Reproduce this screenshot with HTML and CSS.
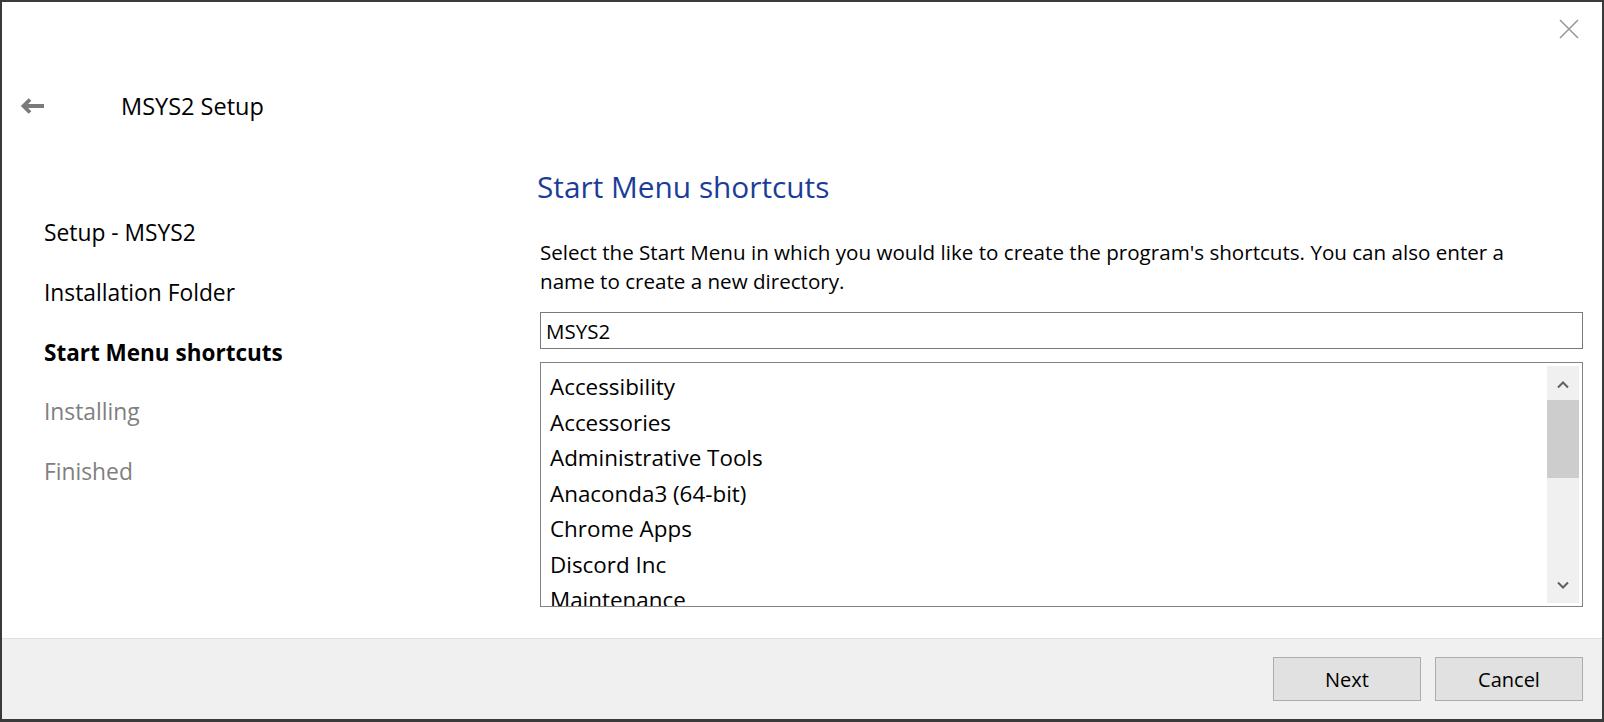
FILE: index.html
```html
<!DOCTYPE html>
<html lang="en">
<head>
    <meta charset="UTF-8">
    <title>MSYS2 Setup</title>
    <link rel="stylesheet" href="styles.css">
</head>
<body>
    <div class="window">
        <div class="topbar">
            <button class="close-btn" title="Close">
                <svg width="20" height="20" viewBox="0 0 20 20">
                    <path d="M1 1 L19 19 M19 1 L1 19" stroke="#999" stroke-width="1.6" fill="none"/>
                </svg>
            </button>
        </div>

        <!-- Back arrow and wizard title -->
        <div class="header">
            <svg class="back-arrow" width="24" height="16" viewBox="0 0 24 16">
                <path d="M5 8 H24" stroke="#7a7a7a" stroke-width="4" fill="none"/>
                <path d="M10 1.5 L3.5 8 L10 14.5" stroke="#7a7a7a" stroke-width="3.8" fill="none"/>
            </svg>
            <span class="title">MSYS2 Setup</span>
        </div>

        <div class="main">
            <!-- Wizard steps -->
            <ul class="steps">
                <li>Setup - MSYS2</li>
                <li>Installation Folder</li>
                <li class="current">Start Menu shortcuts</li>
                <li class="pending">Installing</li>
                <li class="pending">Finished</li>
            </ul>

            <div class="page">
                <h1>Start Menu shortcuts</h1>
                <p class="description">Select the Start Menu in which you would like to create the program's shortcuts. You can also enter a name to create a new directory.</p>
                <input type="text" class="folder-input" value="MSYS2">

                <div class="listbox">
                    <ul class="list-items">
                        <li>Accessibility</li>
                        <li>Accessories</li>
                        <li>Administrative Tools</li>
                        <li>Anaconda3 (64-bit)</li>
                        <li>Chrome Apps</li>
                        <li>Discord Inc</li>
                        <li>Maintenance</li>
                    </ul>
                    <div class="scrollbar">
                        <svg class="sb-arrow sb-up" width="12" height="8" viewBox="0 0 12 8">
                            <path d="M1 6.5 L6 1.5 L11 6.5" stroke="#606060" stroke-width="2" fill="none"/>
                        </svg>
                        <div class="sb-track">
                            <div class="sb-thumb"></div>
                        </div>
                        <svg class="sb-arrow sb-down" width="12" height="8" viewBox="0 0 12 8">
                            <path d="M1 1.5 L6 6.5 L11 1.5" stroke="#606060" stroke-width="2" fill="none"/>
                        </svg>
                    </div>
                </div>
            </div>
        </div>

        <div class="footer">
            <button class="btn">Next</button>
            <button class="btn">Cancel</button>
        </div>
    </div>
</body>
</html>
```

FILE: styles.css
```css
html, body {
    margin: 0;
    padding: 0;
}

body {
    background: #3a3a3a;
    font-family: 'Open Sans', 'Noto Sans', sans-serif;
    color: #000;
    overflow: hidden;
}

.window {
    margin: 2px 2px 0 2px;
    height: 717px;
    background: #fff;
    display: flex;
    flex-direction: column;
}

.topbar {
    height: 80px;
    display: flex;
    justify-content: flex-end;
    align-items: flex-start;
    padding-right: 23px;
    box-sizing: border-box;
}

.close-btn {
    margin-top: 17px;
    width: 20px;
    height: 20px;
    padding: 0;
    border: none;
    background: none;
    display: flex;
}

.header {
    height: 48px;
    display: flex;
    align-items: center;
    padding-left: 18px;
}

.back-arrow {
    flex-shrink: 0;
}

.title {
    margin-left: 77px;
    font-size: 23.5px;
    line-height: 30px;
}

.main {
    flex: 1;
    display: flex;
}

.steps {
    list-style: none;
    margin: 0;
    padding: 73px 0 0 42px;
    width: 538px;
    box-sizing: border-box;
}

.steps li {
    font-size: 22.8px;
    line-height: 59.8px;
}

.steps li.current {
    font-weight: bold;
    font-size: 22.5px;
}

.steps li.pending {
    color: #7f7f7f;
}

.page {
    flex: 1;
    padding: 37px 19px 0 0;
}

.page h1 {
    margin: 0 0 0 -3px;
    font-size: 29.8px;
    line-height: 40px;
    font-weight: normal;
    color: #1b3d98;
}

.description {
    margin: 31px 0 0 0;
    max-width: 1000px;
    font-size: 20.6px;
    line-height: 29px;
}

.folder-input {
    display: block;
    margin-top: 16px;
    width: 100%;
    height: 37px;
    box-sizing: border-box;
    border: 1px solid #7a7a7a;
    padding: 0 5px;
    font-family: inherit;
    font-size: 20.5px;
    color: #000;
    outline: none;
}

.listbox {
    margin-top: 13px;
    height: 245px;
    box-sizing: border-box;
    border: 1px solid #828282;
    display: flex;
}

.list-items {
    flex: 1;
    list-style: none;
    margin: 0;
    padding: 6px 0 0 9px;
    overflow: hidden;
}

.list-items li {
    font-size: 22.4px;
    line-height: 35.5px;
    white-space: nowrap;
}

.scrollbar {
    width: 32px;
    margin: 3px 3px 3px 0;
    background: #f0f0f0;
    display: flex;
    flex-direction: column;
    align-items: center;
}

.sb-arrow {
    flex-shrink: 0;
}

.sb-up {
    margin: 15px 0 11px;
}

.sb-down {
    margin: 0 0 14px;
}

.sb-track {
    flex: 1;
    width: 100%;
}

.sb-thumb {
    height: 78px;
    background: #cdcdcd;
}

.footer {
    height: 81px;
    box-sizing: border-box;
    border-top: 1px solid #dfdfdf;
    background: #f0f0f0;
    display: flex;
    justify-content: flex-end;
    align-items: flex-start;
    gap: 14px;
    padding: 18px 19px 0 0;
}

.btn {
    width: 148px;
    height: 44px;
    background: #e1e1e1;
    border: 1px solid #adadad;
    font-family: inherit;
    font-size: 20px;
    color: #000;
    padding: 0;
}
```
